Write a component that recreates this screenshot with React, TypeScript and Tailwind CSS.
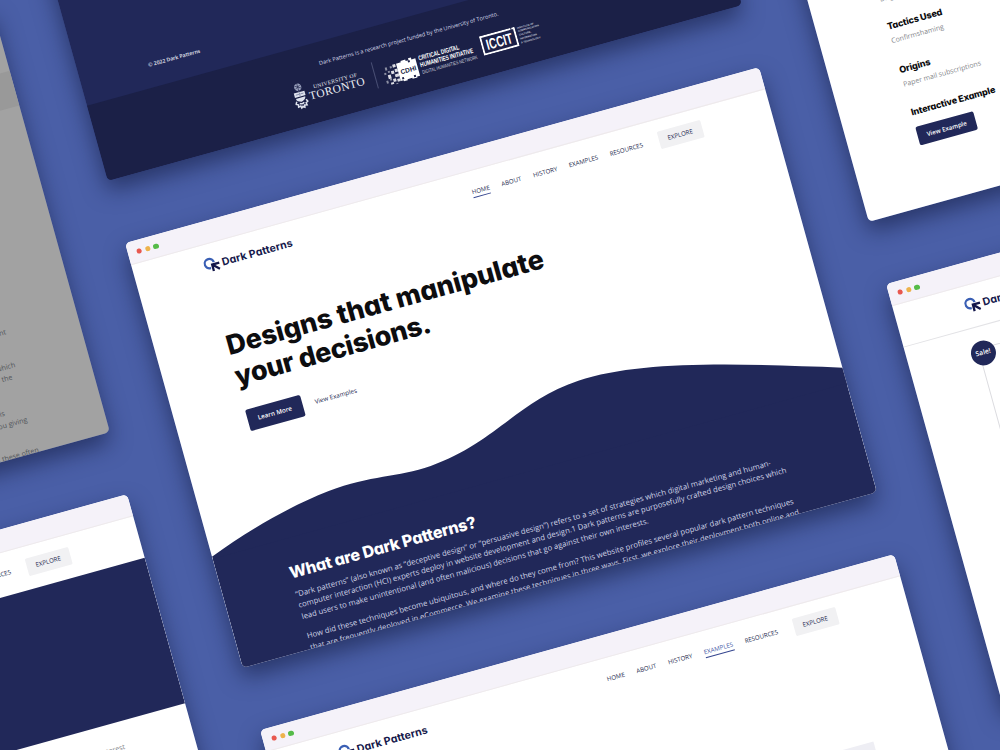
import type { ReactNode } from "react";

const display = "font-['Inter',sans-serif] [font-feature-settings:'cv11']";

function BrowserWindow({ place, bar = true, body, children }: { place: string; bar?: boolean; body: string; children: ReactNode }) {
  return (
    <section
      className={`absolute h-[441px] w-[657.5px] origin-top-left -rotate-[15.5deg] rounded-[5px] shadow-[-2px_10px_22px_rgba(14,22,56,0.55)] ${place}`}
    >
      <div className={`flex h-full w-full flex-col overflow-hidden rounded-[5px] ${body}`}>
        {bar && (
          <div className="flex h-[22.5px] shrink-0 items-center gap-[3.4px] border-b border-[#eeeaec] bg-[#f5f2f9] pt-[1px] pl-[9px]">
            <i className="size-[5.3px] rounded-full bg-[#e8584f]" />
            <i className="size-[5.3px] rounded-full bg-[#edb34c]" />
            <i className="size-[5.3px] rounded-full bg-[#55bb48]" />
          </div>
        )}
        {children}
      </div>
    </section>
  );
}

function Logo() {
  return (
    <div className="flex items-center">
      <svg viewBox="0 0 17 17" className="size-[17px]" fill="none">
        <circle cx="5.8" cy="6.4" r="4.7" stroke="#3a5fb4" strokeWidth="2.2" />
        <path d="M15.6 7.9 H8 V14.8 M8.2 8.1 L14.6 14.3" stroke="#fff" strokeWidth="3.6" />
        <path d="M15.6 8.1 H8.2 V14.8 M8.2 8.1 L14.6 14.3" stroke="#13164a" strokeWidth="2.3" />
      </svg>
      <span className={`ml-[1.4px] text-[10.6px] leading-[17px] font-bold tracking-[0.12px] whitespace-nowrap text-[#15184b] ${display}`}>
        Dark Patterns
      </span>
    </div>
  );
}

const links = ["HOME", "ABOUT", "HISTORY", "EXAMPLES", "RESOURCES"];

function Header({ active, line = false }: { active?: string; line?: boolean }) {
  return (
    <header className={`flex h-[43px] shrink-0 items-center justify-between pr-[71px] pl-[70px] ${line ? "border-b border-[#e3e3e6]" : ""}`}>
      <Logo />
      <nav className="flex items-center gap-[12.3px] text-[6.15px] leading-[8px] font-medium text-[#1b1f4d]">
        {links.map((l) => (
          <span key={l} className={`relative ${l === active && l !== "HOME" ? "text-[#4358a6]" : ""}`}>
            {l}
            {l === active && <i className="absolute inset-x-0 -bottom-[2px] h-[0.9px] bg-[#34458f]" />}
          </span>
        ))}
        <span className="ml-[4px] flex h-[18px] w-[45px] items-center justify-center rounded-[1.5px] bg-[#f1f1f3]">EXPLORE</span>
      </nav>
    </header>
  );
}

function UniversityLogo() {
  return (
    <div className="flex items-center">
      <svg viewBox="0 0 14 27" className="mr-[2.5px] h-[27px] w-[14px]" fill="#dfe3ee">
        <circle cx="7" cy="4.4" r="3.6" fill="#9aa1bd" />
        <path d="M4 2.5 L10 6 M10 2.5 L4 6 M7 1 V8 M6.5 8 H7.5 V10 H6.5Z" stroke="#1b2047" strokeWidth=".6" />
        <path d="M1.5 9.5 H12.5 V14 H1.5Z M2.2 15.2 H11.8 C11.8 17.6 9.8 18.5 7 19.4 C4.2 18.5 2.2 17.6 2.2 15.2Z" />
        <path d="M3 11.6 H6.3 M7.7 11.6 H11 M7 9.8 V13.6" stroke="#6d7598" strokeWidth=".7" />
        <path
          d="M2.2 18.2 L.9 20.5 L3 21.6 L2.6 23.8 L5 23.3 L5.4 25.6 L7 24.2 L8.6 25.6 L9 23.3 L11.4 23.8 L11 21.6 L13.1 20.5 L11.8 18.2 M4.7 20.6 Q7 22.3 9.3 20.6"
          fill="none"
          stroke="#dfe3ee"
          strokeWidth="1.5"
        />
      </svg>
      <div className="flex flex-col items-center font-['Liberation_Serif',serif] whitespace-nowrap text-[#eef0f6]">
        <span className="text-[5.6px] leading-[6px] tracking-[0.28px]">UNIVERSITY OF</span>
        <span className="text-[11.4px] leading-[11px] tracking-[0.5px]">TORONTO</span>
      </div>
    </div>
  );
}

function CdhiLogo() {
  return (
    <div className="flex items-center">
      <svg viewBox="0 0 36 24" className="h-[24px] w-[36px]" fill="#fff">
        <path d="M15 3h5v-1.500h5v1.500h3v-2h3v2h4v18h-3v1h-5v-1h-5v1h-4v-1h-3Z" />
        <path d="M11 3h3v3h-3z M12 8h3v3h-3z M8 9h3v3h-3z M11 13h4v3h-4z M8 17h3v3h-3z M12 18h3v3h-3z M4 12h3v4h-3z M5 20h3v2h-3z" opacity=".85" />
        <path d="M3 4h2v3h-2z M8 4h2v2h-2z M1 9h2v2h-2z M5 8h2v2h-2z M1 17h2v3h-2z M5 16h2v2h-2z M10 22h2v1h-2z" opacity=".5" />
        <path d="M27 3h2v2h-2z M17 18h2v2h-2z M29 19h2v2h-2z" fill="#1b2047" />
        <text x="17.300" y="14.500" fontFamily="Liberation Sans" fontSize="6.500" fontWeight="700" fill="#14183c" textLength="16" lengthAdjust="spacingAndGlyphs">
          CDHI
        </text>
      </svg>
      <div className="ml-[2px] w-[57px]">
        <div className="w-max origin-left scale-x-[0.72] font-['Liberation_Sans',sans-serif] text-[6.6px] leading-[6.7px] whitespace-nowrap text-white">
          <p className="font-bold">CRITICAL DIGITAL</p>
          <p className="font-bold">HUMANITIES INITIATIVE</p>
          <p className="text-[5.1px] text-[#c9cddd]">DIGITAL HUMANITIES NETWORK</p>
        </div>
      </div>
    </div>
  );
}

function IccitLogo() {
  return (
    <div className="flex items-center">
      <svg viewBox="0 0 37 20" className="h-[20px] w-[37px]">
        <path d="M32.500 1 H1 V19 H36 V1 H33.500" fill="none" stroke="#fff" strokeWidth="1.900" />
        <text x="5" y="15.300" fontFamily="Liberation Sans" fontSize="15" fontWeight="700" fill="#fff" textLength="27" lengthAdjust="spacingAndGlyphs">
          ICCIT
        </text>
      </svg>
      <div className="ml-[2px] font-['Liberation_Sans',sans-serif] text-[2.5px] leading-[3.7px] font-bold whitespace-nowrap text-[#c5c9da]">
        <p>INSTITUTE OF</p>
        <p>COMMUNICATION</p>
        <p>CULTURE,</p>
        <p>INFORMATION</p>
        <p>&amp; TECHNOLOGY</p>
      </div>
    </div>
  );
}

function FooterWindow() {
  return (
    <BrowserWindow place="-left-[10.3px] -top-[244px]" bar={false} body="bg-[#212859]">
      <div className="h-[362.5px] shrink-0 pt-[335.5px] pl-[70px] text-[5.2px] leading-[8px] font-semibold text-[#e8eaf3]">© 2022 Dark Patterns</div>
      <footer className="grow bg-[#1b2047] pt-[17px]">
        <p className="pl-[235px] text-[5.6px] leading-[8px] font-medium whitespace-nowrap text-[#d7daea]">
          Dark Patterns is a research project funded by the University of Toronto.
        </p>
        <div className="mt-[9.500px] flex h-[27px] items-start pl-[200.500px]">
          <UniversityLogo />
          <i className="ml-[10px] h-[27px] w-[0.7px] bg-[#4a4f75]" />
          <div className="mt-[4.500px] ml-[9px]">
            <CdhiLogo />
          </div>
          <div className="mt-[4px] ml-[7px]">
            <IccitLogo />
          </div>
        </div>
      </footer>
    </BrowserWindow>
  );
}

function HomeWindow() {
  return (
    <BrowserWindow place="left-[124.7px] top-[243px]" body="bg-white">
      <Header active="HOME" />
      <div className="shrink-0 pt-[45px] pl-[70.500px]">
        <h1 className={`text-[27px] leading-[32px] font-extrabold whitespace-nowrap text-[#0d0d0f] ${display}`}>
          Designs that manipulate
          <br />
          <span className="tracking-[-0.3px]">your decisions.</span>
        </h1>
        <div className="mt-[18px] flex items-center gap-[13px] text-[6.3px] leading-[8px]">
          <span className="flex h-[22px] w-[57px] items-center justify-center rounded-[2px] bg-[#212859] font-semibold text-white">Learn More</span>
          <span className="font-medium text-[#23284f]">View Examples</span>
        </div>
      </div>
      <svg viewBox="0 250 658.5 80" className="mt-[34.500px] h-[80px] w-[658.5px] shrink-0" fill="#212859">
        <path d="M0 326.500 C40 312 85 299 130 294.500 S200 300 235 297.500 C303 293 335 258.500 400 255 S558 281 658.500 313 V331 H0Z" />
      </svg>
      <div className="-mt-px grow bg-[#212859] pt-[24px] pl-[70.500px] whitespace-nowrap">
        <h2 className={`text-[16.2px] leading-[20px] font-extrabold tracking-[-0.2px] text-white ${display}`}>What are Dark Patterns?</h2>
        <div className="mt-[6.500px] text-[7.75px] leading-[11.7px] text-[#cfd3e6]">
          <p>
            “Dark patterns” (also known as “deceptive design” or “persuasive design”) refers to a set of strategies which digital marketing and human-
            <br />
            computer interaction (HCI) experts deploy in website development and design.1 Dark patterns are purposefully crafted design choices which
            <br />
            lead users to make unintentional (and often malicious) decisions that go against their own interests.
          </p>
          <p className="mt-[8.800px]">
            How did these techniques become ubiquitous, and where do they come from? This website profiles several popular dark pattern techniques
            <br />
            that are frequently deployed in eCommerce. We examine these techniques in three ways. First, we explore their deployment both online and
          </p>
        </div>
      </div>
    </BrowserWindow>
  );
}

function ExamplesWindow() {
  return (
    <BrowserWindow place="left-[259.700px] top-[730px]" body="bg-white">
      <Header active="EXAMPLES" />
      <div className="mt-[109px] ml-[70px] h-[160px] w-[517.500px] shrink-0 bg-[#eeeef4]" />
    </BrowserWindow>
  );
}

function TacticWindow() {
  const title = `text-[9.1px] leading-[12px] font-extrabold tracking-[-0.15px] whitespace-nowrap text-[#0d0d0f] ${display}`;
  const value = "mt-[4px] text-[7px] leading-[10px] whitespace-nowrap text-[#85878c]";
  return (
    <BrowserWindow place="left-[750.700px] -top-[202.700px]" bar={false} body="bg-white">
      <div className="pt-[225px] pl-[70px]">
        <p className="text-[7px] leading-[10px] text-[#85878c]">Disguise</p>
        <h3 className={`mt-[17px] ${title}`}>Tactics Used</h3>
        <p className={value}>Confirmshaming</p>
        <h3 className={`mt-[18.500px] ${title}`}>Origins</h3>
        <p className={value}>Paper mail subscriptions</p>
        <h3 className={`mt-[18.500px] ${title}`}>Interactive Example</h3>
        <span className="mt-[8.500px] flex h-[19.500px] w-[60px] items-center justify-center rounded-[2px] bg-[#212859] text-[6.2px] font-semibold text-white">
          View Example
        </span>
      </div>
    </BrowserWindow>
  );
}

function ShopWindow() {
  return (
    <BrowserWindow place="left-[885.700px] top-[283.800px]" body="bg-white">
      <Header line />
      <div className="relative mt-[21px] ml-[70.500px] h-[260px] w-[230px] shrink-0 border border-[#dcdce0]">
        <span className="absolute -top-[7.500px] -left-[8.500px] flex size-[24.500px] items-center justify-center rounded-full bg-[#212859] text-[6.8px] font-semibold text-white">
          Sale!
        </span>
      </div>
    </BrowserWindow>
  );
}

function HeroWindow() {
  return (
    <BrowserWindow place="-left-[507.500px] top-[670px]" body="bg-white">
      <Header />
      <div className="h-[151px] shrink-0 bg-[#212859]" />
      <p className="mt-[20px] pr-[69px] text-right text-[7.1px] leading-[11.700px] text-[#85878c]">a matter of interest</p>
    </BrowserWindow>
  );
}

function DimmedWindow() {
  return (
    <BrowserWindow place="-left-[642.500px] top-[183px]" bar={false} body="bg-[#a2a2a2]">
      <div className="mt-[66px] h-[36px] shrink-0 bg-[#999999]" />
      <div className="mt-[209px] flex flex-col items-end pr-[73px] text-[7.1px] leading-[11.700px] whitespace-nowrap text-[#515459]">
        <p>consent</p>
        <p className="mt-[22px]">which</p>
        <p className="mr-[6px]">the</p>
        <p className="mt-[21px] mr-[23px]">is</p>
        <p className="mr-[3px]">you giving</p>
        <p className="mt-[20px]">practice, these often</p>
      </div>
    </BrowserWindow>
  );
}

export default function App() {
  return (
    <main className="relative h-[750px] w-[1000px] overflow-hidden bg-[#4a5fa7] font-['Open_Sans',sans-serif]">
      <DimmedWindow />
      <HeroWindow />
      <FooterWindow />
      <HomeWindow />
      <ExamplesWindow />
      <TacticWindow />
      <ShopWindow />
    </main>
  );
}
